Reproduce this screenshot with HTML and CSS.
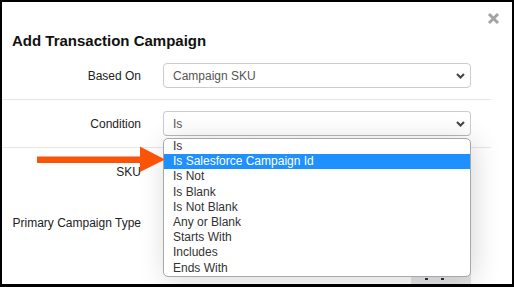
FILE: index.html
```html
<!DOCTYPE html>
<html>
<head>
<meta charset="utf-8">
<link rel="stylesheet" href="styles.css">
</head>
<body>
<div class="frame">
  <div class="header">
    <h1 class="title">Add Transaction Campaign</h1>
    <button class="close" aria-label="Close">
      <svg width="13" height="13" viewBox="0 0 13 13"><path d="M2 2 L11 11 M11 2 L2 11" stroke="#a3a3a3" stroke-width="3" stroke-linecap="butt"/></svg>
    </button>
  </div>
  <div class="row bordered">
    <label class="label">Based On</label>
    <div class="select"><span>Campaign SKU</span><svg class="chev" width="9" height="6" viewBox="0 0 9 6"><path d="M1 1 L4.5 4.5 L8 1" fill="none" stroke="#444" stroke-width="2"/></svg></div>
  </div>
  <div class="row bordered">
    <label class="label">Condition</label>
    <div class="select focus"><span>Is</span><svg class="chev" width="9" height="6" viewBox="0 0 9 6"><path d="M1 1 L4.5 4.5 L8 1" fill="none" stroke="#444" stroke-width="2"/></svg></div>
  </div>
  <div class="row sku">
    <label class="label">SKU</label>
    <div class="field"></div>
  </div>
  <div class="row">
    <label class="label">Primary Campaign Type</label>
    <div class="field"></div>
  </div>
  <div class="actions">
    <div class="btn"><i></i><i></i></div>
  </div>

  <ul class="dropdown">
    <li>Is</li>
    <li class="hl">Is Salesforce Campaign Id</li>
    <li>Is Not</li>
    <li>Is Blank</li>
    <li>Is Not Blank</li>
    <li>Any or Blank</li>
    <li>Starts With</li>
    <li>Includes</li>
    <li>Ends With</li>
  </ul>

  <svg class="arrow" width="130" height="27" viewBox="0 0 130 27">
    <rect x="0" y="10.5" width="105" height="6.5" fill="#f95408"/>
    <polygon points="103,0.5 128,13.5 103,26" fill="#f95408"/>
  </svg>
</div>
</body>
</html>
```

FILE: styles.css
```css
* { box-sizing: border-box; }
html, body { margin: 0; padding: 0; background: #000; }
body { width: 514px; height: 287px; overflow: hidden; }

.frame {
  position: relative;
  width: 514px;
  height: 287px;
  border: 2px solid #000;
  border-bottom-width: 3px;
  background: #fff;
  overflow: hidden;
  font-family: "Liberation Sans", Arial, sans-serif;
  color: #222;
}

.header {
  display: flex;
  align-items: flex-start;
  padding: 8px 12px 2px 10px;
}
.title {
  flex: 1;
  margin: 22px 0 0 0;
  font-size: 15px;
  line-height: 18px;
  font-weight: bold;
  color: #111;
}
.close {
  margin: 2px 0 0 0;
  padding: 0;
  border: 0;
  background: none;
  width: 13px;
  height: 13px;
  display: block;
}
.close svg { display: block; }

.row {
  display: flex;
  align-items: center;
  gap: 22px;
  padding: 11px 0;
  margin-right: 21px;
}
.row.bordered { border-bottom: 1px solid #e6e6e6; }
.row.sku { padding-bottom: 15px; }

.label {
  width: 139px;
  text-align: right;
  font-size: 12px;
  line-height: 14px;
  color: #222;
}

.select, .field {
  width: 308px;
  height: 25px;
  border: 1px solid #ccc;
  border-radius: 4px;
  background: #fff;
}
.select {
  display: flex;
  align-items: center;
  justify-content: space-between;
  padding: 0 5px 0 9px;
  font-size: 12px;
  color: #555;
}
.select.focus { border-bottom-color: #b8b8b8; }
.chev { display: block; }

.actions {
  display: flex;
  padding: 4px 0 0 409px;
}
.btn {
  width: 60px;
  height: 40px;
  background: #e4e4e4;
  display: flex;
  align-items: flex-start;
  gap: 13px;
  padding: 28px 0 0 14px;
}
.btn i {
  display: block;
  width: 3px;
  height: 2px;
  background: #2a3150;
}

.dropdown {
  position: absolute;
  left: 161px;
  top: 136px;
  width: 308px;
  margin: 0;
  padding: 0;
  list-style: none;
  background: #fff;
  border: 1px solid #a8a8a8;
  border-radius: 5px;
  box-shadow: 3px 3px 28px rgba(0, 0, 0, 0.16);
  overflow: hidden;
  font-size: 12px;
  color: #333;
}
.dropdown li {
  height: 15.2px;
  line-height: 15.2px;
  padding-left: 9px;
  white-space: nowrap;
}
.dropdown li.hl {
  background: #1e90ff;
  color: #fff;
}

.arrow {
  position: absolute;
  left: 35px;
  top: 144px;
  display: block;
}
```
